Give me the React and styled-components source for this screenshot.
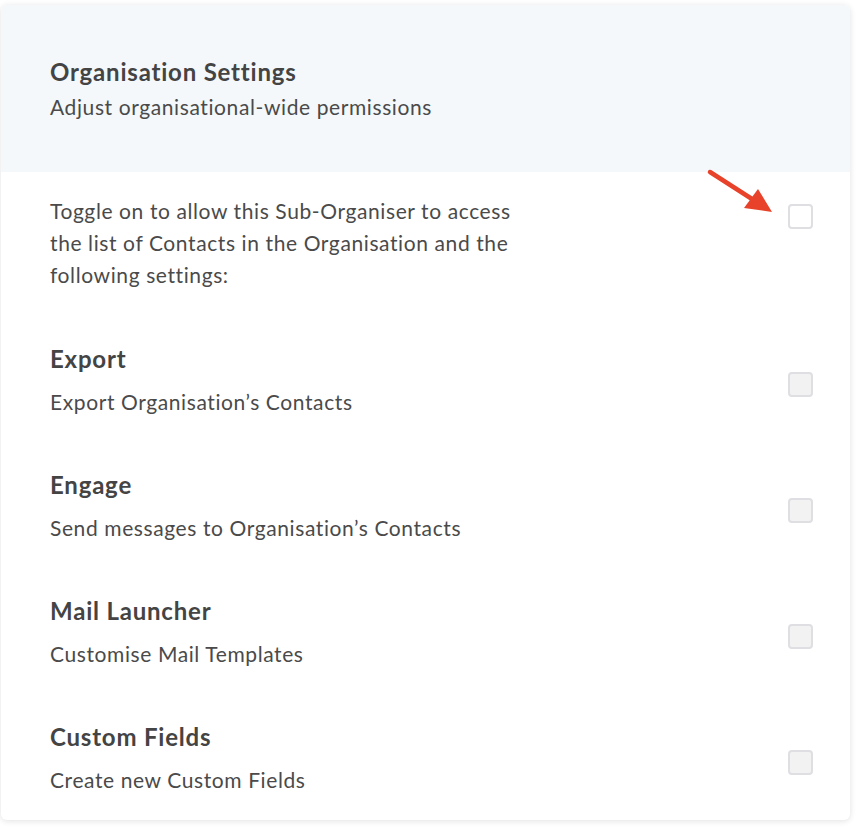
import React from 'react'
import styled, { createGlobalStyle } from 'styled-components'

const GlobalStyle = createGlobalStyle`
  body {
    margin: 0;
    background: #ffffff;
    font-family: Lato, "Open Sans", sans-serif;
  }
`

const Card = styled.div`
  position: relative;
  width: 849px;
  margin: 5px 0 8px 1px;
  background: #ffffff;
  border-radius: 6px;
  box-shadow: 0 1px 6px rgba(0, 0, 0, 0.12);
  overflow: hidden;
  color: #474747;
`

const Header = styled.div`
  background: #f4f8fb;
  padding: 52px 49px 50px;
  display: flex;
  flex-direction: column;
  gap: 5px;
`

const Title = styled.div`
  font-size: 24px;
  font-weight: 700;
  line-height: 30px;
  letter-spacing: 0.8px;
  color: #444;
`

const Subtitle = styled.div`
  font-size: 21px;
  line-height: 30px;
  letter-spacing: 0.6px;
  color: #4a4a4a;
`

const Body = styled.div`
  padding: 23px 37px 25px 49px;
  display: flex;
  flex-direction: column;
  gap: 53px;
`

const Row = styled.div`
  display: flex;
  justify-content: space-between;
  align-items: flex-start;
`

const Intro = styled.div`
  font-size: 21px;
  line-height: 32px;
  letter-spacing: 0.6px;
  max-width: 475px;
  color: #4a4a4a;
`

const RowText = styled.div`
  display: flex;
  flex-direction: column;
  gap: 13px;
`

const Checkbox = styled.div`
  width: 25px;
  height: 25px;
  box-sizing: border-box;
  border: 2px solid #dedee3;
  border-radius: 4px;
  background: ${p => (p.$disabled ? '#f2f2f2' : '#ffffff')};
  margin-top: ${p => p.$offset}px;
  flex-shrink: 0;
`

const Arrow = styled.svg`
  position: absolute;
  left: 699px;
  top: 155px;
`

const settings = [
  { title: 'Export', text: 'Export Organisation\u2019s Contacts' },
  { title: 'Engage', text: 'Send messages to Organisation\u2019s Contacts' },
  { title: 'Mail Launcher', text: 'Customise Mail Templates' },
  { title: 'Custom Fields', text: 'Create new Custom Fields' },
]

const App = () => {
  return (
    <>
      <GlobalStyle />
      <Card>
        <Header>
          <Title>Organisation Settings</Title>
          <Subtitle>Adjust organisational-wide permissions</Subtitle>
        </Header>
        <Body>
          <Row>
            <Intro>
              Toggle on to allow this Sub-Organiser to access the list of Contacts in the
              Organisation and the following settings:
            </Intro>
            <Checkbox $offset={9} />
          </Row>
          {settings.map(s => (
            <Row key={s.title}>
              <RowText>
                <Title>{s.title}</Title>
                <Subtitle>{s.text}</Subtitle>
              </RowText>
              <Checkbox $disabled $offset={28} />
            </Row>
          ))}
        </Body>
        <Arrow width="80" height="60" viewBox="0 0 80 60">
          <line x1="10" y1="12" x2="52" y2="39" stroke="#e8432a" strokeWidth="4.5" strokeLinecap="round" />
          <polygon points="72,52 44,48 58,29" fill="#e8432a" />
        </Arrow>
      </Card>
    </>
  )
}

export default App
